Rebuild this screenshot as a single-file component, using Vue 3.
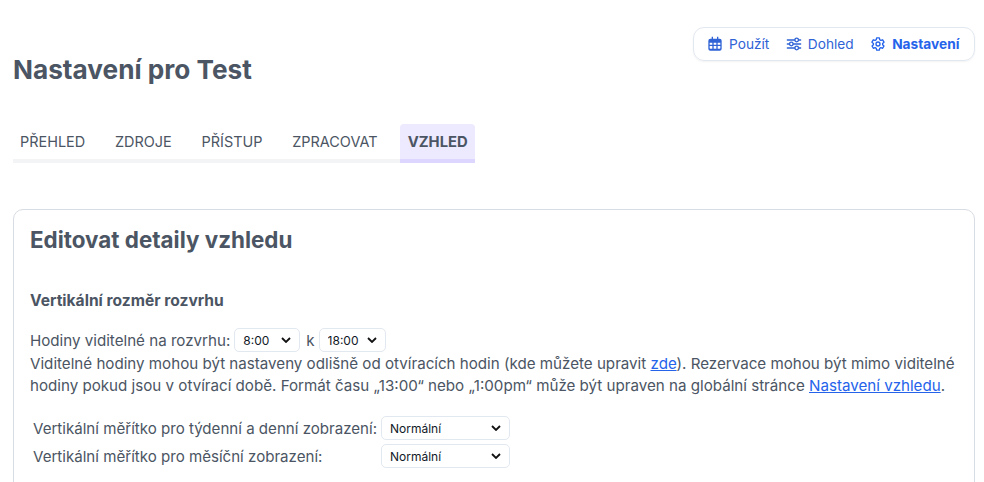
<script setup>
const tabs = [
  { label: 'PŘEHLED' },
  { label: 'ZDROJE' },
  { label: 'PŘÍSTUP' },
  { label: 'ZPRACOVAT' },
  { label: 'VZHLED', active: true },
]
const hours = ['8:00', '18:00']
const scales = [
  'Vertikální měřítko pro týdenní a denní zobrazení:',
  'Vertikální měřítko pro měsíční zobrazení:',
]
</script>

<template>
  <main class="page">
    <header class="top">
      <h1>Nastavení pro Test</h1>
      <nav class="switcher">
        <a class="sw-item">
          <svg viewBox="0 0 24 24" class="ico"><path fill="currentColor" d="M7 1h2v3h6V1h2v3h2a3 3 0 0 1 3 3v12a3 3 0 0 1-3 3H5a3 3 0 0 1-3-3V7a3 3 0 0 1 3-3h2V1zM4 10v3h4v-3H4zm6 0v3h4v-3h-4zm6 0v3h4v-3h-4zM4 15v3a1 1 0 0 0 1 1h3v-4H4zm6 0v4h4v-4h-4zm6 0v4h3a1 1 0 0 0 1-1v-3h-4z"/></svg>
          <span>Použít</span>
        </a>
        <a class="sw-item">
          <svg viewBox="0 0 24 24" class="ico" fill="none" stroke="currentColor" stroke-width="2" stroke-linecap="round"><path d="M2 6h11M19 6h3M2 12h3M11 12h11M2 18h11M19 18h3"/><circle cx="16" cy="6" r="2.700"/><circle cx="8" cy="12" r="2.700"/><circle cx="16" cy="18" r="2.700"/></svg>
          <span>Dohled</span>
        </a>
        <a class="sw-item current">
          <svg viewBox="0 0 24 24" class="ico" fill="none" stroke="currentColor" stroke-width="2" stroke-linejoin="round"><path d="M10 2.800h4l.6 2.800 1.700 1 2.700-.9 2 3.500-2.100 1.900v1.900l2.100 1.900-2 3.500-2.700-.9-1.700 1-.6 2.800h-4l-.6-2.800-1.700-1-2.700.9-2-3.500 2.100-1.900v-1.900L2.900 9.200l2-3.500 2.700.9 1.700-1z"/><circle cx="12" cy="12" r="3"/></svg>
          <span>Nastavení</span>
        </a>
      </nav>
    </header>

    <nav class="tabs">
      <a v-for="tab in tabs" :key="tab.label" class="tab" :class="{ active: tab.active }">{{ tab.label }}</a>
    </nav>

    <section class="card">
      <h2>Editovat detaily vzhledu</h2>
      <h3>Vertikální rozměr rozvrhu</h3>
      <div class="hours">
        <span>Hodiny viditelné na rozvrhu:</span>
        <select class="sel"><option>{{ hours[0] }}</option></select>
        <span class="to">k</span>
        <select class="sel sel-to"><option>{{ hours[1] }}</option></select>
      </div>
      <p class="note">
        Viditelné hodiny mohou být nastaveny odlišně od otvíracích hodin (kde můžete upravit <a href="#">zde</a>). Rezervace mohou být mimo viditelné
        hodiny pokud jsou v otvírací době. Formát času „13:00“ nebo „1:00pm“ může být upraven na globální stránce <a href="#">Nastavení vzhledu</a>.
      </p>
      <div class="scales">
        <template v-for="s in scales" :key="s">
          <label>{{ s }}</label>
          <select class="sel sel-scale"><option>Normální</option></select>
        </template>
      </div>
    </section>
  </main>
</template>

<style scoped>
.page {
  box-sizing: border-box;
  height: 482px;
  overflow: hidden;
  padding: 27px 9px 0 13px;
  font-family: Inter, "Liberation Sans", sans-serif;
  color: #4b5563;
}

.top {
  display: flex;
  justify-content: space-between;
  align-items: flex-start;
  height: 97px;
}

h1 {
  margin: 27px 0 0;
  font-size: 26.200px;
  line-height: 32px;
  font-weight: 700;
  color: #4b5563;
}

.switcher {
  display: flex;
  align-items: center;
  gap: 16.500px;
  box-sizing: border-box;
  height: 34px;
  padding: 0 13px;
  width: 282px;
  border: 1px solid #e2e8f0;
  border-radius: 11px;
  box-shadow: 0 1px 2px rgba(0, 0, 0, 0.05);
  font-size: 13.700px;
  color: #2f63d6;
}

.sw-item {
  display: flex;
  align-items: center;
  gap: 6px;
}

.current {
  font-weight: 700;
  color: #2563eb;
}

.ico {
  width: 16px;
  height: 16px;
}

.tabs {
  display: flex;
  width: 462px;
  height: 39px;
  box-shadow: inset 0 -4px 0 #f3f4f6;
}

.tab {
  display: flex;
  align-items: center;
  box-sizing: border-box;
  height: 35px;
  padding: 0 7px;
  margin-right: 15.800px;
  font-size: 14.450px;
  color: #4b5563;
}

.tab.active {
  margin-right: 0;
  height: 39px;
  padding: 0 7.500px;
  font-size: 14.800px;
  font-weight: 700;
  background: #ede9fe;
  border-radius: 4px 4px 0 0;
  border-bottom: 4px solid #ddd6fe;
}

.card {
  box-sizing: border-box;
  height: 320px;
  margin-top: 46px;
  padding: 16px 16px 0;
  border: 1px solid #d8dce3;
  border-radius: 10px;
}

h2 {
  margin: 0;
  font-size: 22.400px;
  line-height: 28px;
  font-weight: 700;
  color: #4b5563;
}

h3 {
  margin: 37px 0 0;
  font-size: 15.600px;
  line-height: 20px;
  font-weight: 700;
  color: #4b5563;
}

.hours {
  display: flex;
  align-items: center;
  gap: 4px;
  margin-top: 17px;
  font-size: 15.150px;
}

.to {
  margin-left: 2px;
}

.note {
  margin: 1px 0 0;
  font-size: 15.150px;
  line-height: 22px;
}

.note a {
  color: #2563eb;
}

.scales {
  display: grid;
  grid-template-columns: 348px 129px;
  align-items: center;
  row-gap: 4px;
  margin: 19px 0 0 3px;
  font-size: 15.100px;
}

.sel {
  appearance: none;
  box-sizing: border-box;
  width: 66px;
  height: 24px;
  padding: 0 0 0 8px;
  border: 1px solid #e2e8f0;
  border-radius: 5px;
  background: #fff url("data:image/svg+xml,%3Csvg xmlns='http://www.w3.org/2000/svg' viewBox='0 0 10 6'%3E%3Cpath d='M1 1l4 4 4-4' fill='none' stroke='%23111' stroke-width='1.800'/%3E%3C/svg%3E") no-repeat right 8px center / 10px 6px;
  font-family: inherit;
  font-size: 12px;
  color: #111827;
}

.sel-to {
  width: 67px;
}

.sel-scale {
  width: 129px;
}
</style>

<style>
body { background: #fff; }
</style>
